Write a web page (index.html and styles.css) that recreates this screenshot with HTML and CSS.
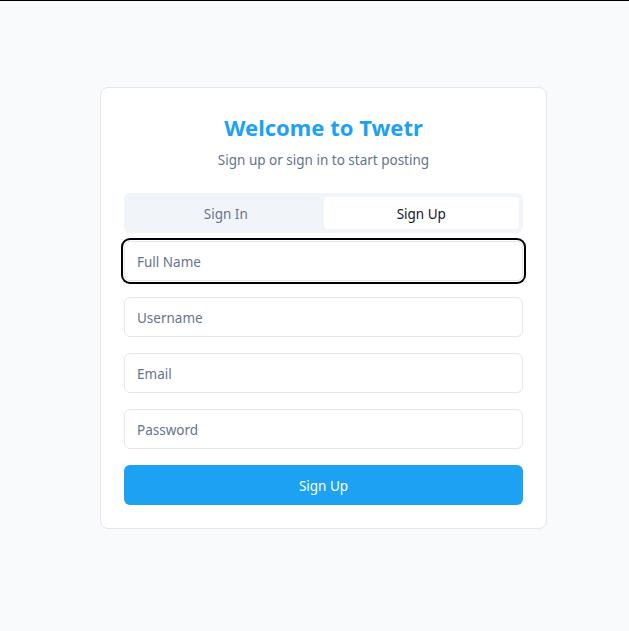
FILE: index.html
```html
<!DOCTYPE html>
<html lang="en">
<head>
<meta charset="utf-8">
<title>Twetr</title>
<link rel="stylesheet" href="styles.css">
</head>
<body>
<div class="topline"></div>
<main class="page">
  <section class="card">
    <header class="head">
      <h1 class="title">Welcome to Twetr</h1>
      <p class="subtitle">Sign up or sign in to start posting</p>
    </header>
    <div class="tabs">
      <button class="tab">Sign In</button>
      <button class="tab active">Sign Up</button>
    </div>
    <form class="form">
      <input class="field focused" type="text" placeholder="Full Name">
      <input class="field" type="text" placeholder="Username">
      <input class="field" type="email" placeholder="Email">
      <input class="field" type="password" placeholder="Password">
      <button class="submit" type="button">Sign Up</button>
    </form>
  </section>
</main>
</body>
</html>
```

FILE: styles.css
```css
* { box-sizing: border-box; }
html, body { margin: 0; padding: 0; }
body {
  background: #f9fafb;
  font-family: "Noto Sans", "Open Sans", sans-serif;
  color: #0f172a;
  height: 631px;
  overflow: hidden;
}
.topline { height: 1px; background: #000; }
.page {
  padding: 86px 0 0 100px;
}
.card {
  width: 447px;
  background: #fff;
  border: 1px solid #e2e8f0;
  border-radius: 8px;
  padding: 23px;
}
.head { text-align: center; }
.title {
  margin: 0;
  font-size: 22px;
  line-height: 32px;
  font-weight: 700;
  color: #1da1f2;
}
.subtitle {
  margin: 7px 0 23px;
  font-size: 13.5px;
  line-height: 20px;
  color: #64748b;
}
.tabs {
  display: grid;
  grid-template-columns: 1fr 1fr;
  background: #f1f5f9;
  border-radius: 6px;
  padding: 4px;
  height: 40px;
}
.tab {
  border: 0;
  background: transparent;
  font: inherit;
  font-size: 13.5px;
  color: #64748b;
  border-radius: 4px;
  padding: 2px 0 0;
  cursor: pointer;
}
.tab.active {
  background: #fff;
  color: #0f172a;
}
.form {
  display: flex;
  flex-direction: column;
  gap: 16px;
  margin-top: 8px;
}
.field {
  height: 40px;
  border: 1px solid #e2e8f0;
  border-radius: 6px;
  padding: 2px 12px 0;
  font: inherit;
  font-size: 13.5px;
  color: #0f172a;
  background: #fff;
  outline: none;
}
.field::placeholder { color: #64748b; }
.field.focused {
  box-shadow: 0 0 0 1px #fff, 0 0 0 3px #000;
}
.submit {
  height: 40px;
  border: 0;
  border-radius: 6px;
  background: #1da1f2;
  color: #fff;
  font: inherit;
  font-size: 13.5px;
  padding: 2px 0 0;
  cursor: pointer;
}
```
